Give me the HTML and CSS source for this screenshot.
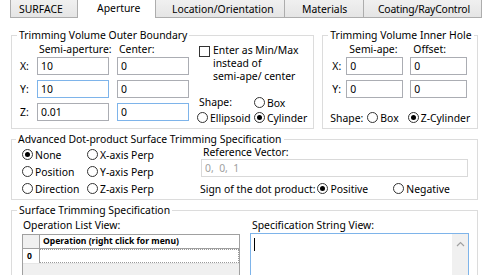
FILE: index.html
```html
<!DOCTYPE html>
<html lang="en">
<head>
    <meta charset="UTF-8">
    <title>Aperture</title>
    <link rel="stylesheet" href="styles.css">
</head>
<body>
    <div class="tabs">
        <div class="tab tab-surface">SURFACE</div>
        <div class="tab tab-aperture selected">Aperture</div>
        <div class="tab tab-location">Location/Orientation</div>
        <div class="tab tab-materials">Materials</div>
        <div class="tab tab-coating">Coating/RayControl</div>
    </div>

    <div class="page">
        <div class="top-row">
            <fieldset class="group outer">
                <legend>Trimming Volume Outer Boundary</legend>
                <div class="outer-body">
                    <div class="coords">
                        <div class="coord-head">
                            <span class="col-head">Semi-aperture:</span>
                            <span class="col-head">Center:</span>
                        </div>
                        <div class="coord-row">
                            <span class="axis">X:</span>
                            <input class="field" type="text" value="10">
                            <input class="field" type="text" value="0">
                        </div>
                        <div class="coord-row">
                            <span class="axis">Y:</span>
                            <input class="field hot" type="text" value="10">
                            <input class="field" type="text" value="0">
                        </div>
                        <div class="coord-row">
                            <span class="axis">Z:</span>
                            <input class="field" type="text" value="0.01">
                            <input class="field hot" type="text" value="0">
                        </div>
                    </div>
                    <div class="outer-side">
                        <div class="check-row">
                            <span class="checkbox"></span>
                            <span class="check-text">Enter as Min/Max<br>instead of<br>semi-ape/ center</span>
                        </div>
                        <div class="shape-grid">
                            <span class="shape-label">Shape:</span>
                            <span class="radio"><i></i>Box</span>
                            <span class="radio"><i></i>Ellipsoid</span>
                            <span class="radio on"><i></i>Cylinder</span>
                        </div>
                    </div>
                </div>
            </fieldset>

            <fieldset class="group inner">
                <legend>Trimming Volume Inner Hole</legend>
                <div class="inner-body">
                    <div class="coord-head">
                        <span class="col-head">Semi-ape:</span>
                        <span class="col-head">Offset:</span>
                    </div>
                    <div class="coord-row">
                        <span class="axis">X:</span>
                        <input class="field" type="text" value="0">
                        <input class="field" type="text" value="0">
                    </div>
                    <div class="coord-row">
                        <span class="axis">Y:</span>
                        <input class="field" type="text" value="0">
                        <input class="field" type="text" value="0">
                    </div>
                    <div class="hole-shape">
                        <span class="shape-label">Shape:</span>
                        <span class="radio"><i></i>Box</span>
                        <span class="radio on"><i></i>Z-Cylinder</span>
                    </div>
                </div>
            </fieldset>
        </div>

        <fieldset class="group advanced">
            <legend>Advanced Dot-product Surface Trimming Specification</legend>
            <div class="advanced-body">
                <div class="mode-grid">
                    <span class="radio on"><i></i>None</span>
                    <span class="radio"><i></i>X-axis Perp</span>
                    <span class="radio"><i></i>Position</span>
                    <span class="radio"><i></i>Y-axis Perp</span>
                    <span class="radio"><i></i>Direction</span>
                    <span class="radio"><i></i>Z-axis Perp</span>
                </div>
                <div class="vector-side">
                    <div class="vector-label">Reference Vector:</div>
                    <input class="field vector" type="text" value="0,  0,  1" disabled>
                    <div class="sign-row">
                        <span>Sign of the dot product:</span>
                        <span class="radio on"><i></i>Positive</span>
                        <span class="radio negative"><i></i>Negative</span>
                    </div>
                </div>
            </div>
        </fieldset>

        <fieldset class="group spec">
            <legend>Surface Trimming Specification</legend>
            <div class="spec-body">
                <div class="op-list">
                    <div class="view-label">Operation List View:</div>
                    <div class="table">
                        <div class="table-head">
                            <span class="corner"></span>
                            <span class="head-cell">Operation (right click for menu)</span>
                        </div>
                        <div class="table-row">
                            <span class="row-num">0</span>
                            <span class="row-cell"></span>
                        </div>
                    </div>
                </div>
                <div class="spec-string">
                    <div class="view-label">Specification String View:</div>
                    <div class="text-view">
                        <span class="caret"></span>
                        <span class="scrollbar">
                            <svg width="9" height="6" viewBox="0 0 9 6"><path d="M1 5 L4.5 1.5 L8 5" fill="none" stroke="#a0a0a0" stroke-width="1.2"/></svg>
                        </span>
                    </div>
                </div>
            </div>
        </fieldset>
    </div>
</body>
</html>
```

FILE: styles.css
```css
body {
    margin: 0;
    width: 491px;
    height: 275px;
    overflow: hidden;
    background-color: #ffffff;
    color: #000000;
    font-family: "Noto Sans", sans-serif;
    font-size: 10.4px;
}

/* Tab strip */
.tabs {
    display: flex;
    margin-left: 10px;
    height: 18px;
}

.tab {
    box-sizing: border-box;
    height: 18px;
    line-height: 19px;
    border: 1px solid #adadad;
    border-top: none;
    background: linear-gradient(#f0f0f0, #e5e5e5);
    white-space: nowrap;
}

.tab.selected {
    background: #ffffff;
    border-color: #ffffff;
    line-height: 17px;
}

.tab-surface { width: 68px; padding-left: 8px; }
.tab-aperture { width: 77px; padding-left: 18px; }
.tab-location { width: 130px; padding-left: 16px; }
.tab-materials { width: 79px; padding-left: 17px; border-left: none; }
.tab-coating { width: 118px; padding-left: 14px; border-left: none; letter-spacing: -0.2px; }

/* Group boxes */
.page {
    padding: 9px 13px 0 11px;
}

.group {
    margin: 0;
    padding: 0;
    min-width: 0;
    border: 1px solid #dcdcdc;
}

.group legend {
    margin-left: 5px;
    padding: 0 2px;
    line-height: 16px;
}

.top-row {
    display: flex;
    gap: 8px;
}

.outer {
    width: 304px;
    box-sizing: border-box;
}

.inner {
    width: 156px;
    box-sizing: border-box;
}

.outer-body {
    display: flex;
    gap: 8px;
    padding: 0 8px 3px 8px;
}

.coord-head {
    display: flex;
    height: 14px;
    line-height: 13px;
    white-space: nowrap;
}

.coord-row {
    display: flex;
    align-items: center;
    height: 18px;
    margin-bottom: 5px;
}

.coord-row:last-child {
    margin-bottom: 0;
}

.field {
    box-sizing: border-box;
    height: 18px;
    margin: 0;
    padding: 0 3px;
    border: 1px solid #abadb3;
    font-family: inherit;
    font-size: 10.4px;
    color: #000000;
    background: #ffffff;
    outline: none;
}

.field.hot {
    border-color: #7eb4ea;
}

.col-head {
    box-sizing: border-box;
}

.outer .axis { width: 17px; }
.outer .field { width: 72px; }
.outer .field + .field { margin-left: 8px; }
.outer .col-head { width: 99px; padding-left: 19px; }
.outer .col-head + .col-head { width: auto; padding-left: 0; }

.outer-side {
    padding-top: 1px;
}

.check-row {
    display: flex;
    gap: 3px;
    padding-left: 2px;
}

.checkbox {
    flex: none;
    width: 11px;
    height: 11px;
    box-sizing: border-box;
    border: 1px solid #333333;
    margin-top: 2px;
}

.check-text {
    line-height: 13px;
    white-space: nowrap;
}

.shape-grid {
    display: grid;
    grid-template-columns: 57px auto;
    grid-auto-rows: 15px;
    margin-top: 12px;
}

.shape-grid .shape-label {
    padding-left: 2px;
}

.radio {
    display: inline-flex;
    align-items: center;
    gap: 2px;
    white-space: nowrap;
}

.radio i {
    flex: none;
    width: 11px;
    height: 11px;
    box-sizing: border-box;
    border: 1px solid #333333;
    border-radius: 50%;
    display: flex;
    align-items: center;
    justify-content: center;
}

.radio.on i::after {
    content: "";
    width: 5px;
    height: 5px;
    border-radius: 50%;
    background: #000000;
}

/* Inner hole */
.inner-body {
    padding: 0 0 3px 9px;
}

.inner .axis { width: 14px; }
.inner .field { width: 57px; }
.inner .field + .field { margin-left: 7px; }
.inner .col-head { width: 81px; padding-left: 17px; }
.inner .col-head + .col-head { width: auto; padding-left: 0; }

.hole-shape {
    display: flex;
    align-items: center;
    height: 15px;
    margin-top: 12px;
    margin-left: -2px;
}

.hole-shape .shape-label {
    margin-right: 4px;
}

.hole-shape .radio + .radio {
    margin-left: 9px;
}

/* Advanced */
.advanced {
    margin-top: 2px;
}

.advanced legend {
    margin-left: 4px;
}

.advanced-body {
    display: flex;
    padding: 0 9px 2px 10px;
    margin-top: -1px;
}

.mode-grid {
    display: grid;
    grid-template-columns: 65px 113px;
    grid-auto-rows: 17px;
}

.vector-side {
    flex: 1;
}

.vector-label {
    line-height: 13px;
    padding-left: 3px;
}

.field.vector {
    width: 267px;
    margin-left: 1px;
    border-color: #d9d9d9;
    color: #a0a0a0;
    background: #ffffff;
}

.sign-row {
    display: flex;
    align-items: center;
    height: 17px;
    margin-top: 3px;
    white-space: nowrap;
}

.sign-row .radio {
    margin-left: 2px;
}

.sign-row .negative {
    margin-left: 25px;
}

/* Surface trimming spec */
.spec {
    margin-top: 2px;
    height: 78px;
    border-bottom: none;
}

.spec-body {
    display: flex;
    gap: 10px;
    padding-left: 10px;
}

.view-label {
    line-height: 15px;
    padding-left: 2px;
    white-space: nowrap;
}

.op-list .view-label {
    padding-left: 1px;
}

.table {
    margin-top: 1px;
    width: 218px;
    height: 46px;
    box-sizing: border-box;
    border: 1px solid #a0a0a0;
    border-bottom: none;
    background: #f0f0f0;
}

.table-head {
    display: flex;
    height: 13px;
    border-bottom: 1px solid #a0a0a0;
    background: #ffffff;
    font-size: 8.6px;
    font-weight: bold;
    line-height: 13px;
}

.corner {
    width: 16px;
    border-right: 1px solid #a0a0a0;
    background: #f0f0f0;
}

.head-cell {
    padding-left: 3px;
}

.table-row {
    display: flex;
    height: 14px;
    line-height: 14px;
    font-size: 8.6px;
    font-weight: bold;
    border-bottom: 1px solid #e6e6e6;
}

.row-num {
    width: 12px;
    padding-left: 4px;
    border-right: 1px solid #a0a0a0;
    background: #ffffff;
}

.row-cell {
    flex: 1;
    background: #ffffff;
    border: 1px dotted #9a9a9a;
    border-left: none;
}

.text-view {
    position: relative;
    width: 219px;
    height: 47px;
    box-sizing: border-box;
    border: 1px solid #7eb4ea;
    border-bottom: none;
    background: #ffffff;
}

.caret {
    position: absolute;
    left: 3px;
    top: 4px;
    width: 1px;
    height: 13px;
    background: #000000;
}

.scrollbar {
    position: absolute;
    top: 0;
    right: 0;
    width: 16px;
    height: 100%;
    background: #f0f0f0;
    display: flex;
    justify-content: center;
    padding-top: 7px;
    box-sizing: border-box;
}
```
